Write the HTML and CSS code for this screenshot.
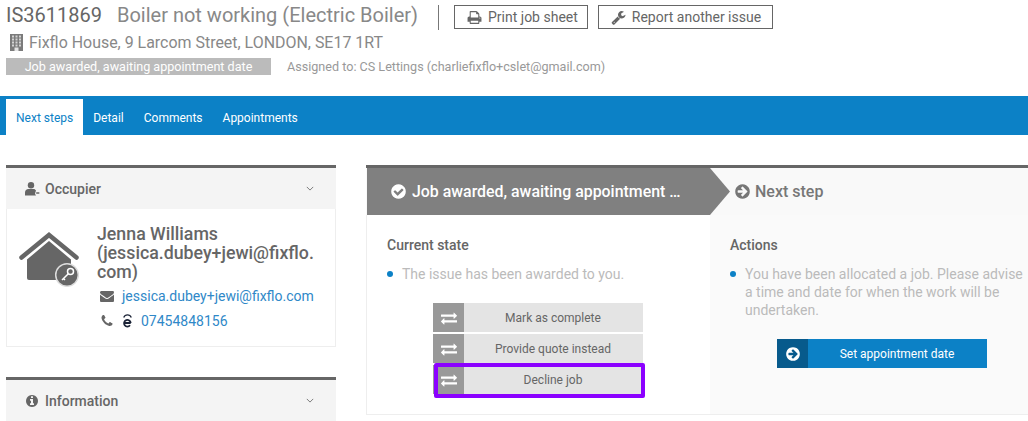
FILE: index.html
```html
<!DOCTYPE html>
<html lang="en">
<head>
  <meta charset="UTF-8" />
  <title>IS3611869 Boiler not working</title>
  <link rel="stylesheet" href="styles.css">
</head>
<body>
<svg class="defs" aria-hidden="true">
  <symbol id="i-print" viewBox="0 0 1792 1792"><path d="M448 1536h896v-256h-896v256zm0-640h896v-384h-160q-40 0-68-28t-28-68v-160h-640v640zm1152 64q0-26-19-45t-45-19-45 19-19 45 19 45 45 19 45-19 19-45zm128 0v416q0 13-9.5 22.5t-22.5 9.5h-224v160q0 40-28 68t-68 28h-960q-40 0-68-28t-28-68v-160h-224q-13 0-22.5-9.5t-9.5-22.5v-416q0-79 56.5-135.5t135.5-56.5h64v-544q0-40 28-68t68-28h672q40 0 88 20t76 48l152 152q28 28 48 76t20 88v256h64q79 0 135.5 56.5t56.5 135.5z"/></symbol>
  <symbol id="i-wrench" viewBox="0 0 1792 1792"><path d="M448 1472q0-26-19-45t-45-19-45 19-19 45 19 45 45 19 45-19 19-45zm644-420l-682 682q-37 37-90 37-52 0-91-37l-106-108q-38-36-38-90 0-53 38-91l681-681q39 98 114.5 173.5t173.5 114.5zm634-435q0 39-23 106-47 134-164.5 217.5t-258.5 83.5q-185 0-316.5-131.5t-131.5-316.5 131.5-316.5 316.5-131.5q58 0 121.5 16.5t107.5 46.5q16 11 16 28t-16 28l-293 169v224l193 107q5-3 79-48.5t135.5-81 70.5-35.5q15 0 23.5 10t8.5 25z"/></symbol>
  <symbol id="i-check" viewBox="0 0 1792 1792"><path d="M1412 734q0-28-18-46l-91-90q-19-19-45-19t-45 19l-408 407-226-226q-19-19-45-19t-45 19l-91 90q-18 18-18 46 0 27 18 45l362 362q19 19 45 19 27 0 46-19l543-543q18-18 18-45zm252 162q0 209-103 385.5t-279.5 279.5-385.5 103-385.5-103-279.5-279.5-103-385.5 103-385.5 279.5-279.5 385.5-103 385.5 103 279.5 279.5 103 385.5z"/></symbol>
  <symbol id="i-next" viewBox="0 0 1792 1792"><path d="M1413 896q0-27-18-45l-91-91-362-362q-18-18-45-18t-45 18l-91 91q-18 18-18 45t18 45l189 189h-502q-26 0-45 19t-19 45v128q0 26 19 45t45 19h502l-189 189q-19 19-19 45t19 45l91 91q18 18 45 18t45-18l362-362 91-91q18-18 18-45zm251 0q0 209-103 385.5t-279.5 279.5-385.5 103-385.5-103-279.5-279.5-103-385.5 103-385.5 279.5-279.5 385.5-103 385.5 103 279.5 279.5 103 385.5z"/></symbol>
  <symbol id="i-swap" viewBox="0 0 1792 1792"><path d="M1792 1184v192q0 13-9.5 22.5t-22.5 9.5h-1376v192q0 13-9.5 22.5t-22.5 9.5q-12 0-24-10l-319-320q-9-9-9-22 0-14 9-23l320-320q9-9 23-9 13 0 22.5 9.5t9.5 22.5v192h1376q13 0 22.5 9.5t9.5 22.5zm0-544q0 14-9 23l-320 320q-9 9-23 9-13 0-22.5-9.5t-9.5-22.5v-192h-1376q-13 0-22.5-9.5t-9.5-22.5v-192q0-13 9.5-22.5t22.5-9.5h1376v-192q0-14 9-23t23-9q12 0 24 10l319 319q9 9 9 23z"/></symbol>
  <symbol id="i-mail" viewBox="0 0 1792 1792"><path d="M1792 710v794q0 66-47 113t-113 47h-1472q-66 0-113-47t-47-113v-794q44 49 101 87 362 246 497 345 57 42 92.5 65.5t94.5 48 110 24.5h2q51 0 110-24.5t94.5-48 92.5-65.5q170-123 498-345 57-39 100-87zm0-294q0 79-49 151t-122 123q-376 261-468 325-10 7-42.5 30.5t-54 38-52 32.5-57.5 27-50 9h-2q-23 0-50-9t-57.5-27-52-32.5-54-38-42.5-30.5q-91-64-262-182.5t-205-142.5q-62-42-117-115.5t-55-136.5q0-78 41.5-130t118.5-52h1472q65 0 112.5 47t47.5 113z"/></symbol>
  <symbol id="i-phone" viewBox="0 0 1792 1792"><path d="M1600 1240q0 27-10 70.5t-21 68.5q-21 50-122 106-94 51-186 51-27 0-53-3.5t-57.5-12.5-47-14.5-55.5-20.5-49-18q-98-35-175-83-127-79-264-216t-216-264q-48-77-83-175-3-9-18-49t-20.5-55.5-14.5-47-12.5-57.5-3.5-53q0-92 51-186 56-101 106-122 25-11 68.5-21t70.5-10q14 0 21 3 18 6 53 76 11 19 30 54t35 63.5 31 53.5q3 4 17.5 25t21.5 35.5 7 28.5q0 20-28.5 50t-62 55-62 53-28.5 46q0 9 5 22.5t8.5 20.5 14 24 11.5 19q76 137 174 235t235 174q2 1 19 11.5t24 14 20.5 8.5 22.5 5q18 0 46-28.5t53-62 55-62 50-28.5q14 0 28.5 7t35.5 21.5 25 17.5q25 15 53.5 31t63.5 35 54 30q70 35 76 53 3 7 3 21z"/></symbol>
  <symbol id="i-info" viewBox="0 0 1792 1792"><path d="M1152 1376v-160q0-14-9-23t-23-9h-96v-512q0-14-9-23t-23-9h-320q-14 0-23 9t-9 23v160q0 14 9 23t23 9h96v320h-96q-14 0-23 9t-9 23v160q0 14 9 23t23 9h448q14 0 23-9t9-23zm-128-896v-160q0-14-9-23t-23-9h-192q-14 0-23 9t-9 23v160q0 14 9 23t23 9h192q14 0 23-9t9-23zm640 416q0 209-103 385.5t-279.5 279.5-385.5 103-385.5-103-279.5-279.5-103-385.5 103-385.5 279.5-279.5 385.5-103 385.5 103 279.5 279.5 103 385.5z"/></symbol>
  <symbol id="i-chev" viewBox="0 0 10 6"><path d="M1 1l4 4 4-4" fill="none" stroke="currentColor" stroke-width="1.200"/></symbol>
</svg>

<header class="job-head">
  <div class="title-row">
    <h1 class="job-title"><span class="job-ref">IS3611869</span> <span class="job-name">Boiler not working (Electric Boiler)</span></h1>
    <a class="btn-outline btn-print"><svg class="ico"><use href="#i-print"/></svg>Print job sheet</a>
    <a class="btn-outline"><svg class="ico"><use href="#i-wrench"/></svg>Report another issue</a>
  </div>
  <div class="address">
    <svg class="ico-building" viewBox="0 0 13 17">
      <rect width="13" height="17" fill="#7b7b7b"/>
      <g fill="#d4d4d4">
        <rect x="2" y="1.500" width="2" height="2"/><rect x="5.500" y="1.500" width="2" height="2"/><rect x="9" y="1.500" width="2" height="2"/>
        <rect x="2" y="4.500" width="2" height="2"/><rect x="5.500" y="4.500" width="2" height="2"/><rect x="9" y="4.500" width="2" height="2"/>
        <rect x="2" y="7.500" width="2" height="2"/><rect x="5.500" y="7.500" width="2" height="2"/><rect x="9" y="7.500" width="2" height="2"/>
        <rect x="2" y="10.500" width="2" height="2"/><rect x="5.500" y="10.500" width="2" height="2"/><rect x="9" y="10.500" width="2" height="2"/>
      </g>
      <rect x="4.500" y="13.500" width="4" height="3.500" fill="#e4e4e4"/>
    </svg>
    Fixflo House, 9 Larcom Street, LONDON, SE17 1RT
  </div>
  <div class="status-row">
    <span class="status-badge">Job awarded, awaiting appointment date</span>
    <span class="assigned">Assigned to: CS Lettings (charliefixflo+cslet@gmail.com)</span>
  </div>
</header>

<nav class="tabs">
  <a class="tab active">Next steps</a>
  <a class="tab">Detail</a>
  <a class="tab">Comments</a>
  <a class="tab">Appointments</a>
</nav>

<main class="content">
  <aside class="side">
    <section class="panel">
      <div class="panel-head">
        <svg class="ico-occ" viewBox="0 0 15 14">
          <circle cx="6" cy="3.300" r="3.200"/>
          <path d="M0 13.500v-3C0 8.400 1.500 7 3.500 7h5c1.200 0 2 .6 2.500 1.500L10.500 10l-.5 1.800 1 1.700z"/>
          <path d="M11.200 10.300h2.600l1 .7-1 .7h-2.600z"/>
        </svg>
        <span>Occupier</span>
        <svg class="chev"><use href="#i-chev"/></svg>
      </div>
      <div class="panel-body occupier">
        <svg class="ico-house" viewBox="0 0 60 55">
          <path d="M2.500 25.500 30 3l27.500 22.500" fill="none" stroke="#666" stroke-width="4.500" stroke-linecap="round"/>
          <path d="M30 9 52 27.500V48H10q-2 0-2-2V27.500z"/>
          <circle cx="48" cy="43" r="11.300" fill="#666" stroke="#ddd" stroke-width="1.500"/>
          <g fill="none" stroke="#fff" stroke-width="1.500">
            <circle cx="51.500" cy="39.500" r="3"/>
            <path d="M49.300 41.700 43 48M44.500 46.500 46 48"/>
          </g>
        </svg>
        <div class="occ-info">
          <h2 class="occ-name">Jenna Williams (jessica.dubey+jewi@fixflo.com)</h2>
          <div class="occ-line mail"><svg class="ico"><use href="#i-mail"/></svg><a>jessica.dubey+jewi@fixflo.com</a></div>
          <div class="occ-line phone">
            <svg class="ico"><use href="#i-phone"/></svg>
            <svg class="ico-e" viewBox="0 0 9 14">
              <path d="M.7 3.400C1.500 1.500 3 .8 4.500.8s3 .7 3.800 2.600" fill="none" stroke="#1b2336" stroke-width="1.300"/>
              <path d="M1.300 9h6.400M7.700 9A3.300 3.300 0 1 0 7 11.300" fill="none" stroke="#1b2336" stroke-width="1.800"/>
            </svg>
            <a>07454848156</a>
          </div>
        </div>
      </div>
    </section>
    <section class="panel">
      <div class="panel-head">
        <svg class="ico"><use href="#i-info"/></svg>
        <span>Information</span>
        <svg class="chev"><use href="#i-chev"/></svg>
      </div>
    </section>
  </aside>

  <section class="workflow">
    <div class="step-row">
      <div class="step-current"><svg class="ico"><use href="#i-check"/></svg>Job awarded, awaiting appointment …</div>
      <div class="step-next"><svg class="ico"><use href="#i-next"/></svg>Next step</div>
    </div>
    <div class="step-body">
      <div class="state-col">
        <h3>Current state</h3>
        <ul class="notes"><li>The issue has been awarded to you.</li></ul>
        <div class="actions-list">
          <a class="action"><span class="action-ico"><svg class="ico"><use href="#i-swap"/></svg></span><span class="action-label">Mark as complete</span></a>
          <a class="action"><span class="action-ico"><svg class="ico"><use href="#i-swap"/></svg></span><span class="action-label">Provide quote instead</span></a>
          <a class="action marked"><span class="action-ico"><svg class="ico"><use href="#i-swap"/></svg></span><span class="action-label">Decline job</span></a>
        </div>
      </div>
      <div class="next-col">
        <h3>Actions</h3>
        <ul class="notes"><li>You have been allocated a job. Please advise a time and date for when the work will be undertaken.</li></ul>
        <a class="action primary"><span class="action-ico"><svg class="ico"><use href="#i-next"/></svg></span><span class="action-label">Set appointment date</span></a>
      </div>
    </div>
  </section>
</main>
</body>
</html>
```

FILE: styles.css
```css
* { box-sizing: border-box; }
html, body { margin: 0; padding: 0; height: 421px; overflow: hidden; background: #fff; }
body { font-family: Roboto, "Liberation Sans", sans-serif; color: #666; }
.defs { display: none; }
.ico { width: 1em; height: 1em; fill: currentColor; flex: none; }

/* job header */
.job-head { height: 96px; padding: 5px 0 0 6px; }
.title-row { display: flex; align-items: flex-start; height: 25px; }
.job-title { margin: 0 15px 0 0; padding-right: 20px; height: 25px; border-right: 1px solid #777; font-size: 20px; line-height: 21px; font-weight: 400; white-space: nowrap; }
.job-ref { color: #666; margin-right: 10px; }
.job-name { color: #888; }
.btn-outline { display: flex; align-items: center; justify-content: center; gap: 6px; height: 24px; padding: 0 11px 0 12px; border: 1px solid #666; font-size: 14px; color: #666; }
.btn-outline .ico { width: 15px; height: 15px; }
.btn-print { margin-right: 10px; padding: 0 9px 0 12px; }
.address { display: flex; align-items: center; gap: 6px; height: 24px; padding-left: 4px; font-size: 15.950px; color: #888; }
.ico-building { width: 13px; height: 17px; }
.status-row { display: flex; align-items: center; margin-top: 4px; }
.status-badge { width: 265px; height: 17px; background: #bbb; color: #fff; font-size: 12.600px; line-height: 17px; text-align: center; }
.assigned { margin-left: 16px; font-size: 12.600px; color: #999; }

/* tabs */
.tabs { display: flex; align-items: flex-end; height: 39px; padding-left: 6px; background: #0c81c6; }
.tab { display: block; height: 36px; padding: 0 10px; color: #fff; font-size: 12px; line-height: 38px; }
.tab.active { background: #fff; color: #0c81c6; }

/* main */
.content { display: flex; align-items: flex-start; padding: 30px 0 0 6px; gap: 30px; }
.side { flex: 0 0 330px; }
.panel { border-top: 3px solid #666; margin-bottom: 30px; }
.panel:last-child { margin-bottom: 0; }
.panel-head { display: flex; align-items: center; gap: 5px; height: 41px; padding: 0 22px 0 19px; background: #f4f4f4; font-size: 14px; font-weight: 500; color: #666; }
.panel-head .ico { margin-right: 1px; }
.panel-head .chev { margin-left: auto; width: 8px; height: 5px; color: #777; }
.ico-occ { width: 15px; height: 14px; fill: #666; }
.panel-body { border: 1px solid #eee; border-top: 0; background: #fff; }
.occupier { display: flex; height: 138px; padding: 22px 15px 0 12px; }
.ico-house { width: 60px; height: 55px; margin-top: 1px; fill: #666; flex: none; }
.occ-info { margin-left: 18px; min-width: 0; flex: 1; }
.occ-name { margin: -6px 0 0; font-size: 17.750px; line-height: 19px; font-weight: 500; color: #666; overflow-wrap: anywhere; }
.occ-line { display: flex; align-items: center; font-size: 14px; color: #666; margin-left: 3px; }
.occ-line a { color: #2f88c8; }
.mail { gap: 8px; margin-top: 1px; height: 25px; }
.phone { height: 25px; gap: 8px; }
.ico-e { width: 9px; height: 14px; margin: 0 1px; }

/* workflow */
.workflow { flex: 1; border-top: 3px solid #666; }
.step-row { display: flex; align-items: center; height: 47px; background: #f9f9f9; padding-left: 1px; }
.step-row .ico { width: 17px; height: 17px; }
.step-current { display: flex; align-items: center; gap: 5px; width: 363px; height: 47px; padding-left: 23px; background: #808080; color: #fff; font-size: 15.900px; font-weight: 500; white-space: nowrap; clip-path: polygon(0 0, 343px 0, 100% 50%, 343px 100%, 0 100%); }
.step-next { display: flex; align-items: center; gap: 4px; margin-left: 4px; font-size: 16px; font-weight: 500; color: #777; }
.step-body { display: flex; height: 200px; border-left: 1px solid #eee; border-bottom: 1px solid #eee; }
.state-col { width: 343px; padding: 22px 0 0 20px; background: #fff; }
.next-col { flex: 1; padding: 22px 0 0 20px; background: #fafafa; }
h3 { margin: 0; font-size: 14px; line-height: 17px; font-weight: 500; color: #666; }
.notes { list-style: none; margin: 11px 0 0; padding: 0 0 0 15px; font-size: 14px; line-height: 18px; color: #bbb; }
.notes li { position: relative; }
.notes li::before { content: ""; position: absolute; left: -15px; top: 6px; width: 6px; height: 6px; border-radius: 50%; background: #0c81c6; }
.actions-list { display: flex; flex-direction: column; gap: 2px; margin: 20px 0 0 46px; width: 210px; }
.action { display: flex; height: 29px; width: 210px; background: #e4e4e4; font-size: 12px; color: #666; }
.action-ico { display: flex; align-items: center; justify-content: center; width: 31px; background: #999; color: #fff; font-size: 16px; }
.action-label { flex: 1; text-align: center; line-height: 30px; padding-right: 1px; }
.action.marked { position: relative; }
.action.marked::after { content: ""; position: absolute; left: 1px; top: -2px; right: -2px; bottom: -4px; border: 4px solid #8b00ff; border-radius: 2px; }
.action.primary { margin: 20px 0 0 47px; background: #0c81c6; color: #fff; }
.primary .action-ico { background: #075a8c; }
```
